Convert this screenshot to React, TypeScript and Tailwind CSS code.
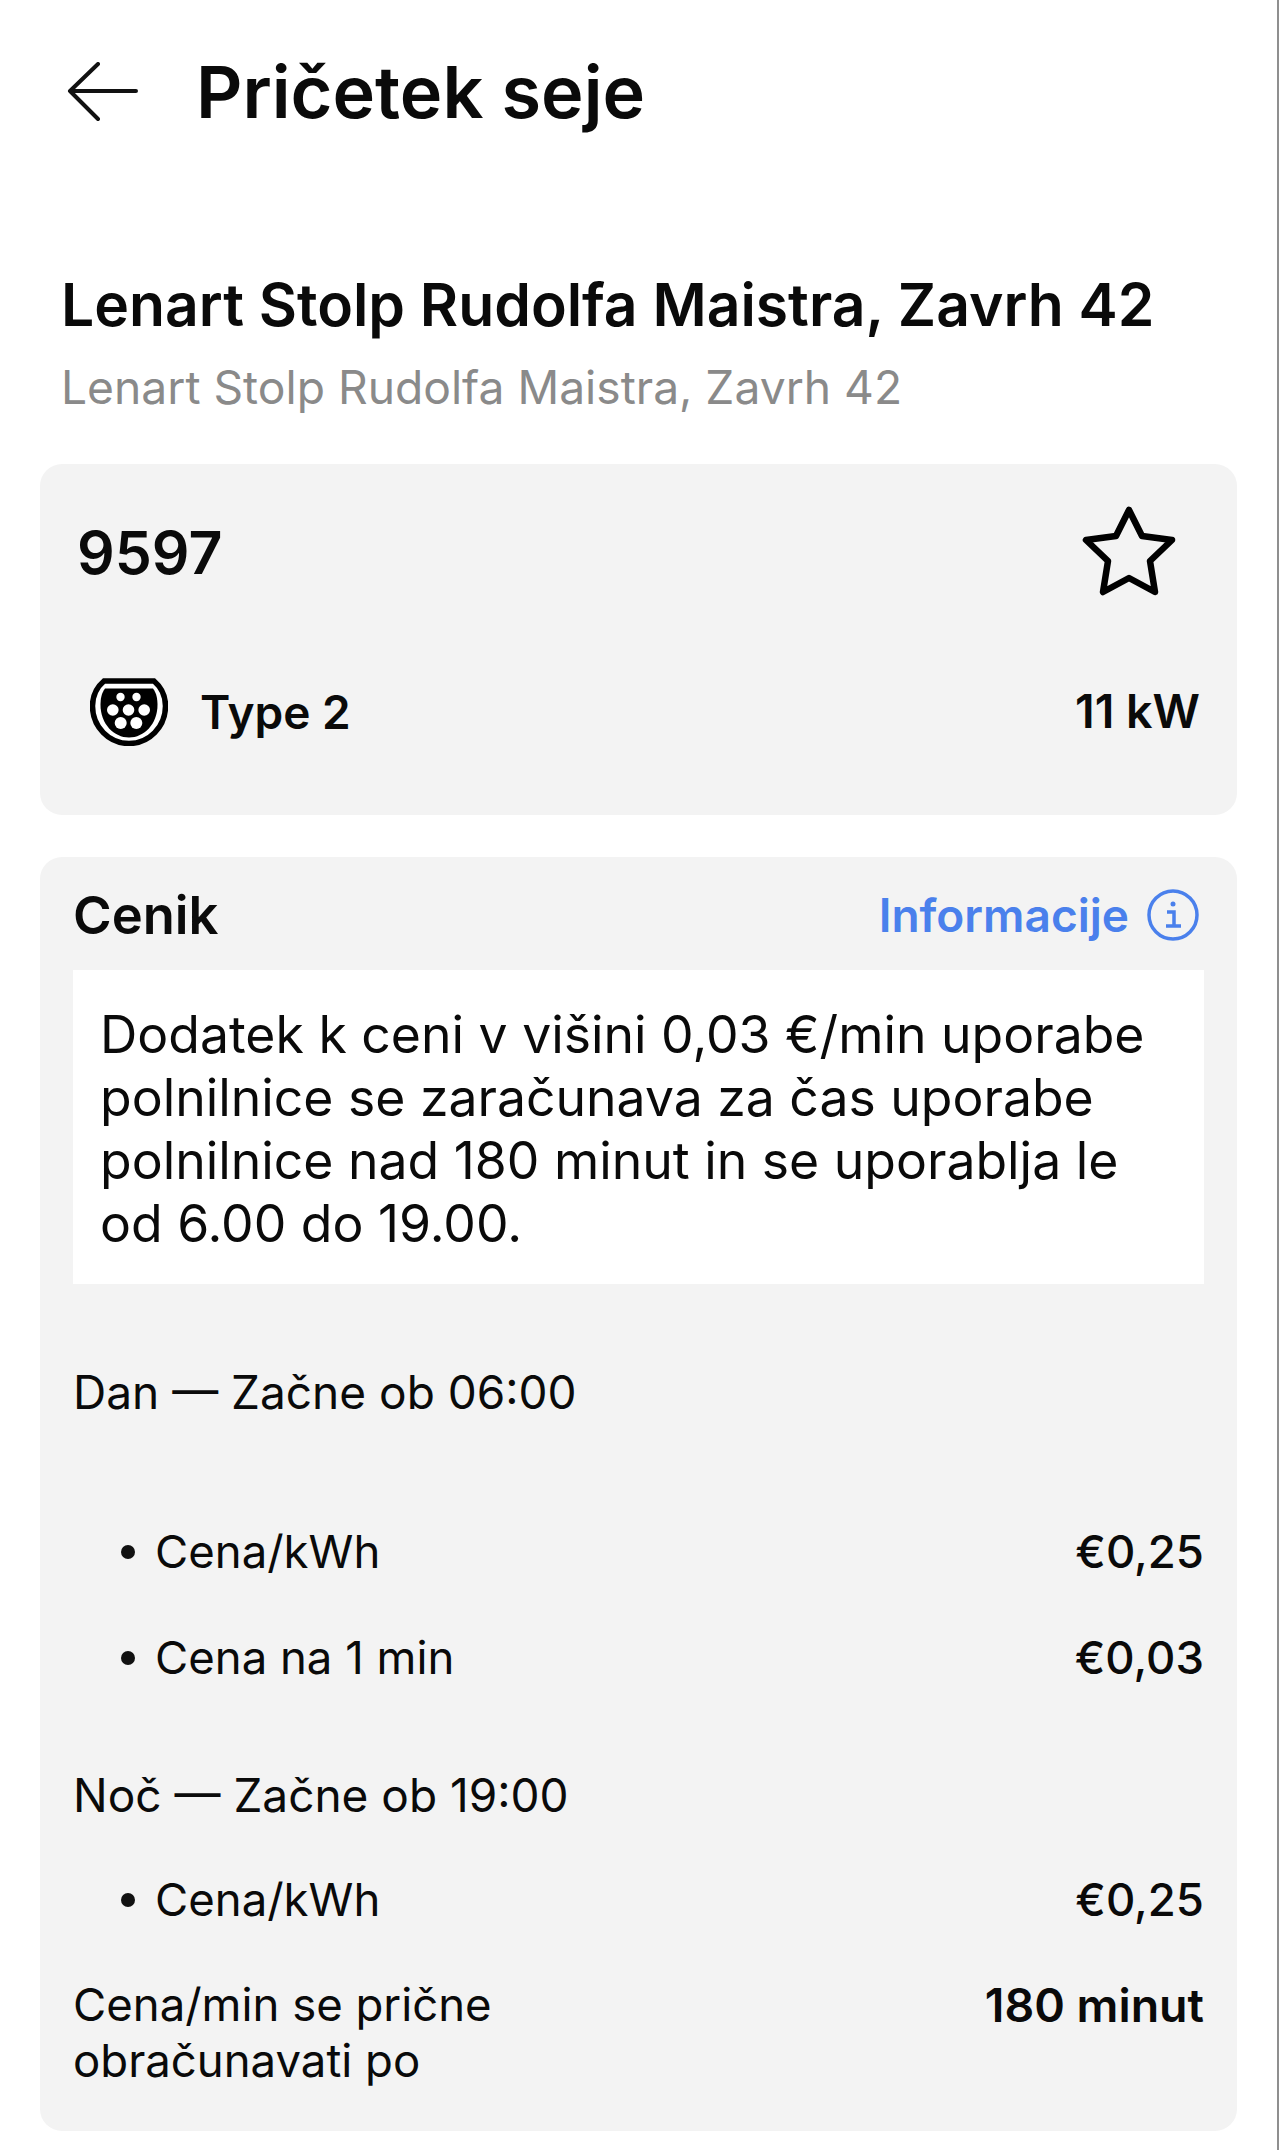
const PriceRow = ({ label, value }: { label: string; value: string }) => {
  return (
    <div className="flex h-[64px] items-center justify-between pl-[48px] text-[45.5px]">
      <div className="flex items-center gap-[20px]">
        <span className="h-[14px] w-[14px] rounded-full bg-[#111111]"></span>
        <span>{label}</span>
      </div>
      <span className="font-medium">{value}</span>
    </div>
  );
};

const ConnectorIcon = () => (
  <svg width="78" height="68" viewBox="0 0 78 68" fill="none">
    <path
      d="M14 3H64C71 9 75.500 18 75.500 28C75.500 49 59 65.500 39 65.500C19 65.500 2.500 49 2.500 28C2.500 18 7 9 14 3Z"
      fill="#fff"
      stroke="#000"
      strokeWidth="5.500"
    />
    <path d="M15 10.500H63C66.500 15 67.500 21 67.500 27C67.500 46 54 59.500 39 59.500C24 59.500 10.500 46 10.500 27C10.500 21 11.500 15 15 10.500Z" fill="#000" />
    <g fill="#fff">
      <circle cx="30.500" cy="19" r="4.200" />
      <circle cx="46.500" cy="19" r="4.200" />
      <circle cx="22.800" cy="32" r="5.800" />
      <circle cx="38.500" cy="32" r="5.800" />
      <circle cx="54.200" cy="32" r="5.800" />
      <circle cx="30.700" cy="45" r="6" />
      <circle cx="46.300" cy="45" r="6" />
    </g>
  </svg>
);

export default function App() {
  return (
    <div className="h-[2150px] w-full overflow-hidden border-r-2 border-[#8f8f8f] bg-white font-['Inter',sans-serif] text-[#0a0a0a]">
      <div className="flex h-[184px] items-center pl-[67px]">
        <svg width="72" height="60" viewBox="0 0 72 60" fill="none" stroke="#111" strokeWidth="4" strokeLinecap="round" strokeLinejoin="round">
          <path d="M69 29H3M31 2L3 29L31 57" />
        </svg>
        <h1 className="ml-[57px] text-[72px] leading-none font-semibold">Pričetek seje</h1>
      </div>

      <div className="px-[61px] pt-[84px]">
        <h2 className="text-[58.800px] leading-[74px] font-semibold">Lenart Stolp Rudolfa Maistra, Zavrh 42</h2>
        <p className="mt-[17px] text-[46.200px] leading-[56px] text-[#8a8a8a]">Lenart Stolp Rudolfa Maistra, Zavrh 42</p>
      </div>

      <div className="mx-[40px] mt-[49px] h-[351px] rounded-[22px] bg-[#f3f3f3]">
        <div className="flex h-[178px] items-center justify-between pr-[61px] pl-[37px]">
          <span className="text-[59px] font-semibold">9597</span>
          <svg width="94" height="90" viewBox="0 0 94 90" fill="none" stroke="#000" strokeWidth="6.500" strokeLinejoin="round" className="-translate-y-[2px]">
            <path d="M47 4L60 30L90 34L68 55L73 86L47 72L21 86L26 55L4 34L34 30Z" />
          </svg>
        </div>
        <div className="mt-[30px] flex h-[80px] items-center justify-between pr-[37px] pl-[50px]">
          <div className="flex items-center gap-[32px]">
            <ConnectorIcon />
            <span className="text-[46px] font-semibold">Type 2</span>
          </div>
          <span className="text-[46.500px] font-semibold">11 kW</span>
        </div>
      </div>

      <div className="mx-[40px] mt-[42px] h-[1274px] rounded-[22px] bg-[#f3f3f3] px-[33px] text-[46px]">
        <div className="flex h-[113px] items-center justify-between pt-[3px] pr-[5px]">
          <span className="text-[52.500px] font-semibold">Cenik</span>
          <div className="flex items-center gap-[18px] text-[#4a80ec]">
            <span className="font-semibold">Informacije</span>
            <svg width="52" height="52" viewBox="0 0 52 52" fill="none" stroke="#4a80ec" strokeWidth="3.500">
              <circle cx="26" cy="26" r="24" />
              <path d="M20 23H27V37M19 37H34" />
              <circle cx="26" cy="15" r="2.500" fill="#4a80ec" stroke="none" />
            </svg>
          </div>
        </div>

        <div className="bg-white px-[27px] pt-[33px] pb-[29px] text-[51.700px] leading-[63px]">
          Dodatek k ceni v višini 0,03 €/min uporabe polnilnice se zaračunava za čas uporabe polnilnice nad 180 minut in se uporablja le od 6.00 do 19.00.
        </div>

        <div className="mt-[76px] flex h-[64px] items-center">Dan — Začne ob 06:00</div>
        <div className="mt-[96px]">
          <PriceRow label="Cena/kWh" value="€0,25" />
        </div>
        <div className="mt-[42px]">
          <PriceRow label="Cena na 1 min" value="€0,03" />
        </div>
        <div className="mt-[73px] flex h-[64px] items-center">Noč — Začne ob 19:00</div>
        <div className="mt-[41px]">
          <PriceRow label="Cena/kWh" value="€0,25" />
        </div>
        <div className="mt-[45px] flex justify-between text-[45.5px] leading-[56px]">
          <span className="w-[460px]">Cena/min se prične obračunavati po</span>
          <span className="text-[46.500px] font-semibold">180 minut</span>
        </div>
      </div>
    </div>
  );
}
